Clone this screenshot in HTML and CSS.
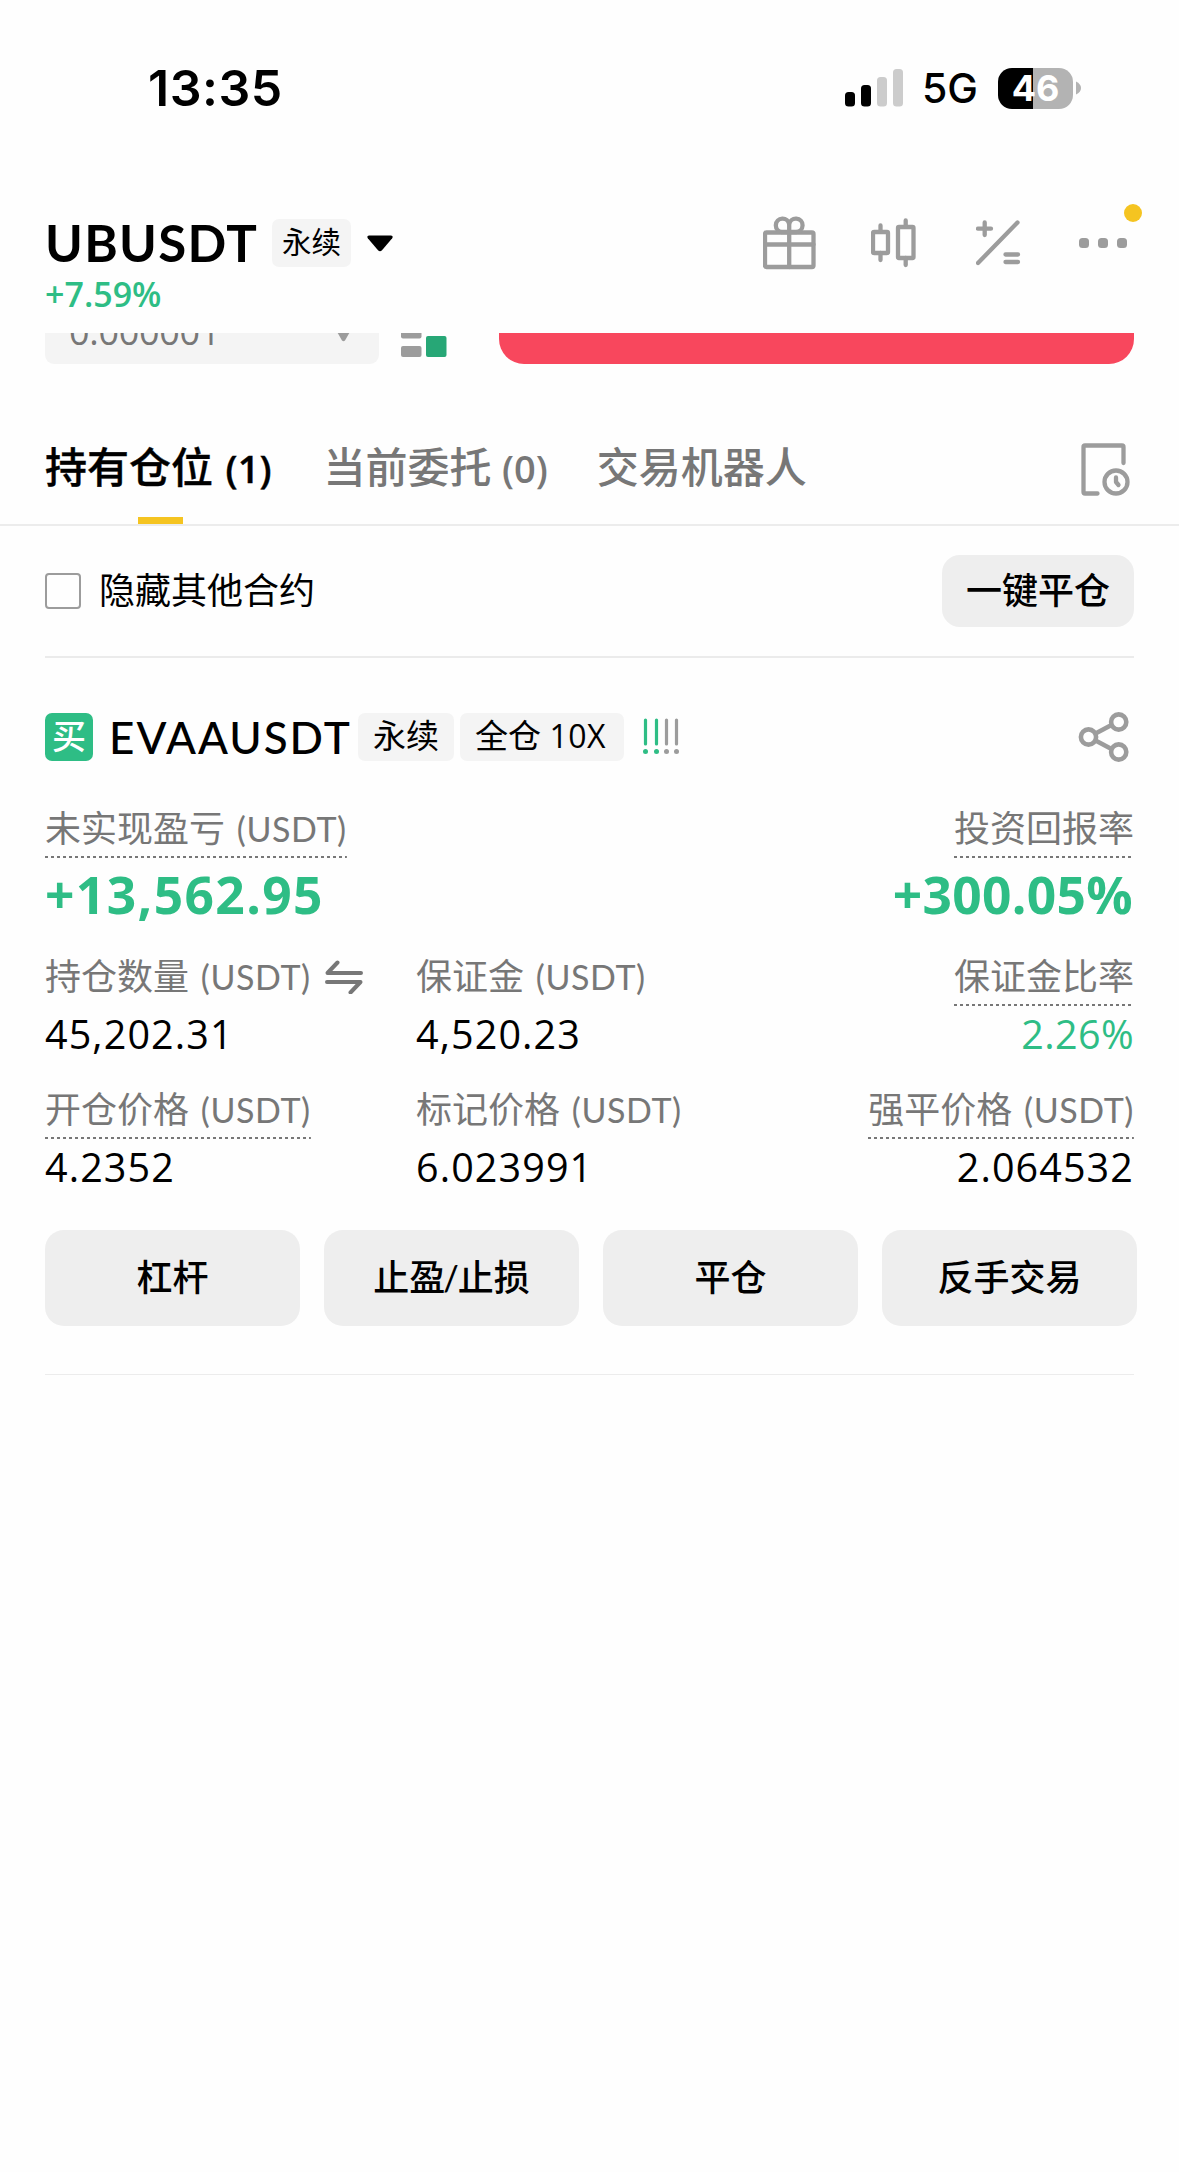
FILE: index.html
```html
<!DOCTYPE html>
<html lang="zh-CN">
<head>
<meta charset="utf-8">
<title>UBUSDT 永续</title>
<link rel="stylesheet" href="styles.css">
</head>
<body>
<div class="statusbar">
  <div class="clock">13:35</div>
  <div class="status-right">
    <svg class="signal" width="58" height="38" viewBox="0 0 58 38">
      <rect x="0" y="23" width="10" height="14.5" rx="3.5"/>
      <rect x="16" y="16" width="10" height="21.5" rx="3.5"/>
      <rect x="32" y="8" width="10" height="29.5" rx="3.5" fill="#ccc"/>
      <rect x="48" y="0" width="10" height="37.5" rx="3.5" fill="#ccc"/>
    </svg>
    <span class="network">5G</span>
    <div class="battery"><span>46</span></div>
    <svg class="nub" width="5" height="14" viewBox="0 0 5 14"><path d="M0 0.5Q5 3 5 7T0 13.5Z" fill="#b3b3b3"/></svg>
  </div>
</div>

<header class="header">
  <div class="pair">
    <div class="pair-row">
      <h1 class="pair-name">UBUSDT</h1>
      <span class="tag tag-head">永续</span>
      <svg class="caret" width="26" height="17" viewBox="0 0 26 17"><path d="M2 0.5h22q2.6 .4 1.2 2.8L15 15.3q-2 2-4 0L.8 3.300Q-.6 .9 2 .5Z"/></svg>
    </div>
    <div class="change">+7.59%</div>
  </div>
  <nav class="tools">
    <svg width="54" height="54" viewBox="0 0 54 54" class="line-icon">
      <rect x="2" y="16.500" width="48.500" height="34.500" rx="1.500"/>
      <path d="M2 28.500h48.500M26.200 16v35M26.200 16h-7.500a6.700 6.700 0 1 1 7.500-7.500zM26.200 16h6.800a6.700 6.700 0 1 0-6.800-7.500z"/>
    </svg>
    <svg width="46" height="52" viewBox="0 0 46 52" class="line-icon">
      <rect x="2" y="15" width="15" height="21" rx="1"/>
      <rect x="27" y="10" width="15.500" height="31" rx="1"/>
      <path d="M9.500 8.500v6M9.500 36v7M34.700 3.500v6M34.700 41v7"/>
    </svg>
    <svg width="46" height="48" viewBox="0 0 46 48" class="line-icon">
      <path d="M2 44L41.500 3.500M8.700 3.500v12.500M2 9.700h13M29.500 35.500h12.500M29.500 43h12.500"/>
    </svg>
    <div class="more">
      <svg width="50" height="12" viewBox="0 0 50 12" fill="#9c9c9c"><rect x="0" y="1" width="10" height="10" rx="3.500"/><rect x="19" y="1" width="10" height="10" rx="3.500"/><rect x="38" y="1" width="10" height="10" rx="3.500"/></svg>
      <i class="dot"></i>
    </div>
  </nav>
</header>

<section class="clipped">
  <div class="select"><span>0.000001</span><svg width="15" height="12" viewBox="0 0 15 12"><path d="M0 0h15L9 10.500q-1.500 1.500-3 0Z" fill="#9c9c9c"/></svg></div>
  <svg class="book" width="46" height="31" viewBox="0 0 46 31"><path d="M0 0h20.500v3.500a2 2 0 0 1-2 2H2a2 2 0 0 1-2-2Z" fill="#9c9c9c"/><rect x="0" y="13" width="20.500" height="11" rx="2" fill="#9c9c9c"/><rect x="25" y="3" width="20.500" height="21" rx="2" fill="#27a776"/></svg>
  <div class="sell"></div>
</section>

<nav class="tabs">
  <a class="tab active">持有仓位 <b>(1)</b></a>
  <a class="tab">当前委托 <b>(0)</b></a>
  <a class="tab">交易机器人</a>
  <svg class="history line-icon" width="54" height="54" viewBox="0 0 54 54">
    <path d="M44.500 21V5q0-1.500-1.500-1.500H6Q4.500 3.500 4.500 5v45q0 1.500 1.500 1.500h12.500"/>
    <circle cx="37" cy="40" r="11.500"/>
    <path d="M37 35.500v4.500l2.500 3"/>
  </svg>
</nav>

<main class="content">
  <div class="filter">
    <label class="hide"><i class="box"></i><span>隐藏其他合约</span></label>
    <button class="close-all">一键平仓</button>
  </div>

  <article class="position">
    <div class="title">
      <span class="side">买</span>
      <h2>EVAAUSDT</h2>
      <span class="tag">永续</span>
      <span class="tag tag-mode">全仓 <b>10X</b></span>
      <svg class="risk" width="38" height="40" viewBox="0 0 38 40">
        <g stroke-width="3.200" stroke-linecap="round">
          <path d="M2.500 3v24M13.500 3v24" stroke="#2ebd85"/>
          <path d="M23.500 3v24M33.500 3v24" stroke="#9c9c9c"/>
        </g>
        <g fill="#2ebd85"><circle cx="2.500" cy="34.500" r="2.500"/><circle cx="13.500" cy="34.500" r="2.500"/></g>
        <g fill="#9c9c9c"><circle cx="23.500" cy="34.500" r="2.500"/><circle cx="33.500" cy="34.500" r="2.500"/></g>
      </svg>
      <svg class="share" width="52" height="52" viewBox="0 0 52 52" fill="none" stroke="#9c9c9c" stroke-width="4.600">
        <circle cx="10.500" cy="26" r="7.600"/><circle cx="40.700" cy="11" r="7.600"/><circle cx="40.700" cy="41" r="7.600"/>
        <path d="M17.500 22.500L33.500 14M17.500 29.500L33.500 38"/>
      </svg>
    </div>

    <div class="pnl">
      <div class="cell"><span class="label hint">未实现盈亏 <b>(USDT)</b></span><span class="big pnl-value">+13,562.95</span></div>
      <div class="cell right"><span class="label hint">投资回报率</span><span class="big">+300.05%</span></div>
    </div>

    <div class="stats">
      <div class="cell"><span class="label">持仓数量 <b>(USDT)</b><svg class="swap" width="38" height="34" viewBox="0 0 38 34"><path d="M36 13H2.500L12.500 2.500M2 22h33.500L25.500 32.500"/></svg></span><span class="value">45,202.31</span></div>
      <div class="cell"><span class="label">保证金 <b>(USDT)</b></span><span class="value">4,520.23</span></div>
      <div class="cell right"><span class="label hint">保证金比率</span><span class="value green">2.26%</span></div>
      <div class="cell"><span class="label hint">开仓价格 <b>(USDT)</b></span><span class="value">4.2352</span></div>
      <div class="cell"><span class="label">标记价格 <b>(USDT)</b></span><span class="value">6.023991</span></div>
      <div class="cell right"><span class="label hint">强平价格 <b>(USDT)</b></span><span class="value">2.064532</span></div>
    </div>

    <div class="actions">
      <button>杠杆</button>
      <button>止盈<b class="slash">/</b>止损</button>
      <button>平仓</button>
      <button>反手交易</button>
    </div>
  </article>
</main>
</body>
</html>
```
FILE: styles.css
```css
* { box-sizing: border-box; margin: 0; padding: 0; }

body {
  width: 1179px;
  min-height: 2172px;
  background: #fefefe;
  color: #000;
  font-family: Lato, "Noto Sans CJK SC", sans-serif;
}

svg { display: block; flex: none; }
b { font-weight: inherit; }
button { border: 0; font: inherit; color: inherit; }

.line-icon {
  fill: none;
  stroke: #9c9c9c;
  stroke-width: 4.300;
  stroke-linecap: round;
  stroke-linejoin: round;
}

/* status bar */
.statusbar {
  display: flex;
  justify-content: space-between;
  height: 176px;
  padding: 58px 98px 0 148px;
  font-family: Inter, sans-serif;
}
.clock { font-size: 50px; font-weight: 600; line-height: 60px; letter-spacing: 0.5px; }
.status-right { display: flex; align-items: center; height: 60px; }
.network { margin-left: 19px; font-size: 41px; font-weight: 500; line-height: 60px; width: 76px; }
.battery {
  width: 75px;
  height: 41px;
  border-radius: 14px;
  background: linear-gradient(90deg, #000 35px, #b3b3b3 35px);
  color: #fff;
  font-size: 36px;
  font-weight: 700;
  line-height: 41px;
  text-align: center;
}
.nub { margin-left: 3px; }

/* header */
.header {
  display: flex;
  justify-content: space-between;
  height: 157px;
  padding: 38px 45px 0;
}
.pair-row { display: flex; align-items: center; height: 58px; }
.pair-name { font-size: 51px; font-weight: 700; line-height: 58px; width: 227px; letter-spacing: 1.300px; }
.tag {
  height: 48px;
  padding: 0 15px;
  border-radius: 7px;
  background: #f4f4f4;
  font-size: 33px;
  line-height: 45px;
  white-space: nowrap;
}
.tag b { font-family: "Open Sans", sans-serif; font-size: 32px; letter-spacing: 0.500px; }
.tag-head { padding: 0 10px; font-size: 29.500px; }
.caret { margin-left: 16px; }
.change {
  margin-top: 4px;
  color: #2ebd85;
  font-family: "Open Sans", sans-serif;
  font-size: 34px;
  font-weight: 600;
  line-height: 36px;
}
.tools { display: flex; align-items: center; height: 58px; }
.tools svg:nth-child(2) { margin-left: 54px; }
.tools svg:nth-child(3) { margin-left: 59px; }
.more { position: relative; margin-left: 57px; width: 55px; }
.dot {
  position: absolute;
  left: 45px;
  top: -33px;
  width: 18px;
  height: 18px;
  border-radius: 50%;
  background: #f5c421;
}

/* order form, scrolled under the header */
.clipped { display: flex; height: 31px; padding: 0 45px; overflow: hidden; }
.select {
  display: flex;
  justify-content: space-between;
  width: 334px;
  height: 31px;
  padding: 0 28px 0 24px;
  border-radius: 0 0 9px 9px;
  background: #f4f4f4;
  color: #777;
  font-family: "Open Sans", sans-serif;
  font-size: 36px;
  letter-spacing: -0.300px;
}
.select span { line-height: 46px; margin-top: -24px; }
.select svg { margin-top: -3px; }
.book { margin: 0 52px 0 22px; }
.sell { flex: 1; border-radius: 0 0 25px 25px; background: #f8475d; }

/* tabs */
.tabs {
  display: flex;
  height: 162px;
  padding: 72px 45px 0;
  border-bottom: 2px solid #ececec;
}
.tab {
  position: relative;
  height: 64px;
  margin-right: 49px;
  color: #777;
  font-size: 42px;
  font-weight: 500;
  line-height: 62px;
  white-space: nowrap;
}
.tab b { font-family: "Open Sans", sans-serif; font-size: 38px; font-weight: 600; }
.active { margin-right: 52px; color: #000; word-spacing: 2px; -webkit-text-stroke: 0.4px #000; }
.active::after {
  content: "";
  position: absolute;
  left: 93px;
  top: 81px;
  width: 45px;
  height: 7px;
  background: #f5c421;
}
.history { margin: 6px 1px 0 auto; }

/* filter row */
.content { padding: 0 45px; }
.filter {
  display: flex;
  align-items: center;
  justify-content: space-between;
  height: 132px;
  border-bottom: 2px solid #ebebeb;
}
.hide { display: flex; align-items: center; gap: 18px; font-size: 36px; line-height: 54px; }
.hide span { padding-bottom: 3px; }
.box { width: 36px; height: 36px; border: 2px solid #9c9c9c; border-radius: 4px; }
.close-all {
  width: 192px;
  height: 72px;
  padding-bottom: 6px;
  border-radius: 18px;
  background: #eee;
  font-size: 36px;
  font-weight: 500;
}

/* position card */
.position { height: 717px; border-bottom: 1px solid #ececec; }
.title { display: flex; align-items: center; height: 158px; }
.side {
  width: 48px;
  height: 48px;
  border-radius: 7px;
  background: #2ebd85;
  color: #fff;
  font-size: 34px;
  font-weight: 500;
  line-height: 45px;
  text-align: center;
}
.title h2 { width: 249px; margin-left: 16px; font-size: 44px; font-weight: 500; line-height: 52px; letter-spacing: 2px; }
.tag-mode { width: 164px; margin-left: 6px; }
.risk { margin-left: 19px; }
.share { margin: 0 4px 0 auto; }

.cell { display: flex; flex-direction: column; align-items: flex-start; }
.right { align-items: flex-end; }
.label {
  display: flex;
  align-items: center;
  height: 54px;
  padding-bottom: 5px;
  color: #777;
  font-size: 36px;
  line-height: 49px;
  white-space: pre;
  word-spacing: 2.500px;
}
.label b { font-size: 34px; letter-spacing: 0.600px; }
.hint {
  background: repeating-linear-gradient(90deg, #777 0 3px, transparent 3px 6px) bottom / 100% 2px no-repeat;
}
.swap { margin-left: 14px; fill: none; stroke: #777; stroke-width: 4; stroke-linecap: round; stroke-linejoin: round; }
.pnl { display: flex; justify-content: space-between; height: 148px; margin-top: -12px; }
.big {
  color: #2ebd85;
  font-family: "Open Sans", sans-serif;
  font-size: 51.500px;
  font-weight: 700;
  line-height: 72px;
  letter-spacing: 0.300px;
}
.pnl-value { letter-spacing: 1.400px; }
.stats { display: grid; grid-template-columns: 371px 1fr 300px; grid-auto-rows: 133px; }
.value {
  font-family: "Open Sans", sans-serif;
  font-size: 39.500px;
  line-height: 56px;
  letter-spacing: 1.100px;
}
.green { color: #2ebd85; letter-spacing: 0.400px; }
.right .big { margin-right: 1px; }

.actions { display: grid; grid-template-columns: repeat(4, 255px); gap: 24px; margin-top: 12px; }
.actions button {
  height: 96px;
  padding-bottom: 6px;
  border-radius: 19px;
  background: #eee;
  font-size: 36px;
  font-weight: 500;
}
.slash { margin: 0 -1px 0 -2px; font-size: 34px; }
```
